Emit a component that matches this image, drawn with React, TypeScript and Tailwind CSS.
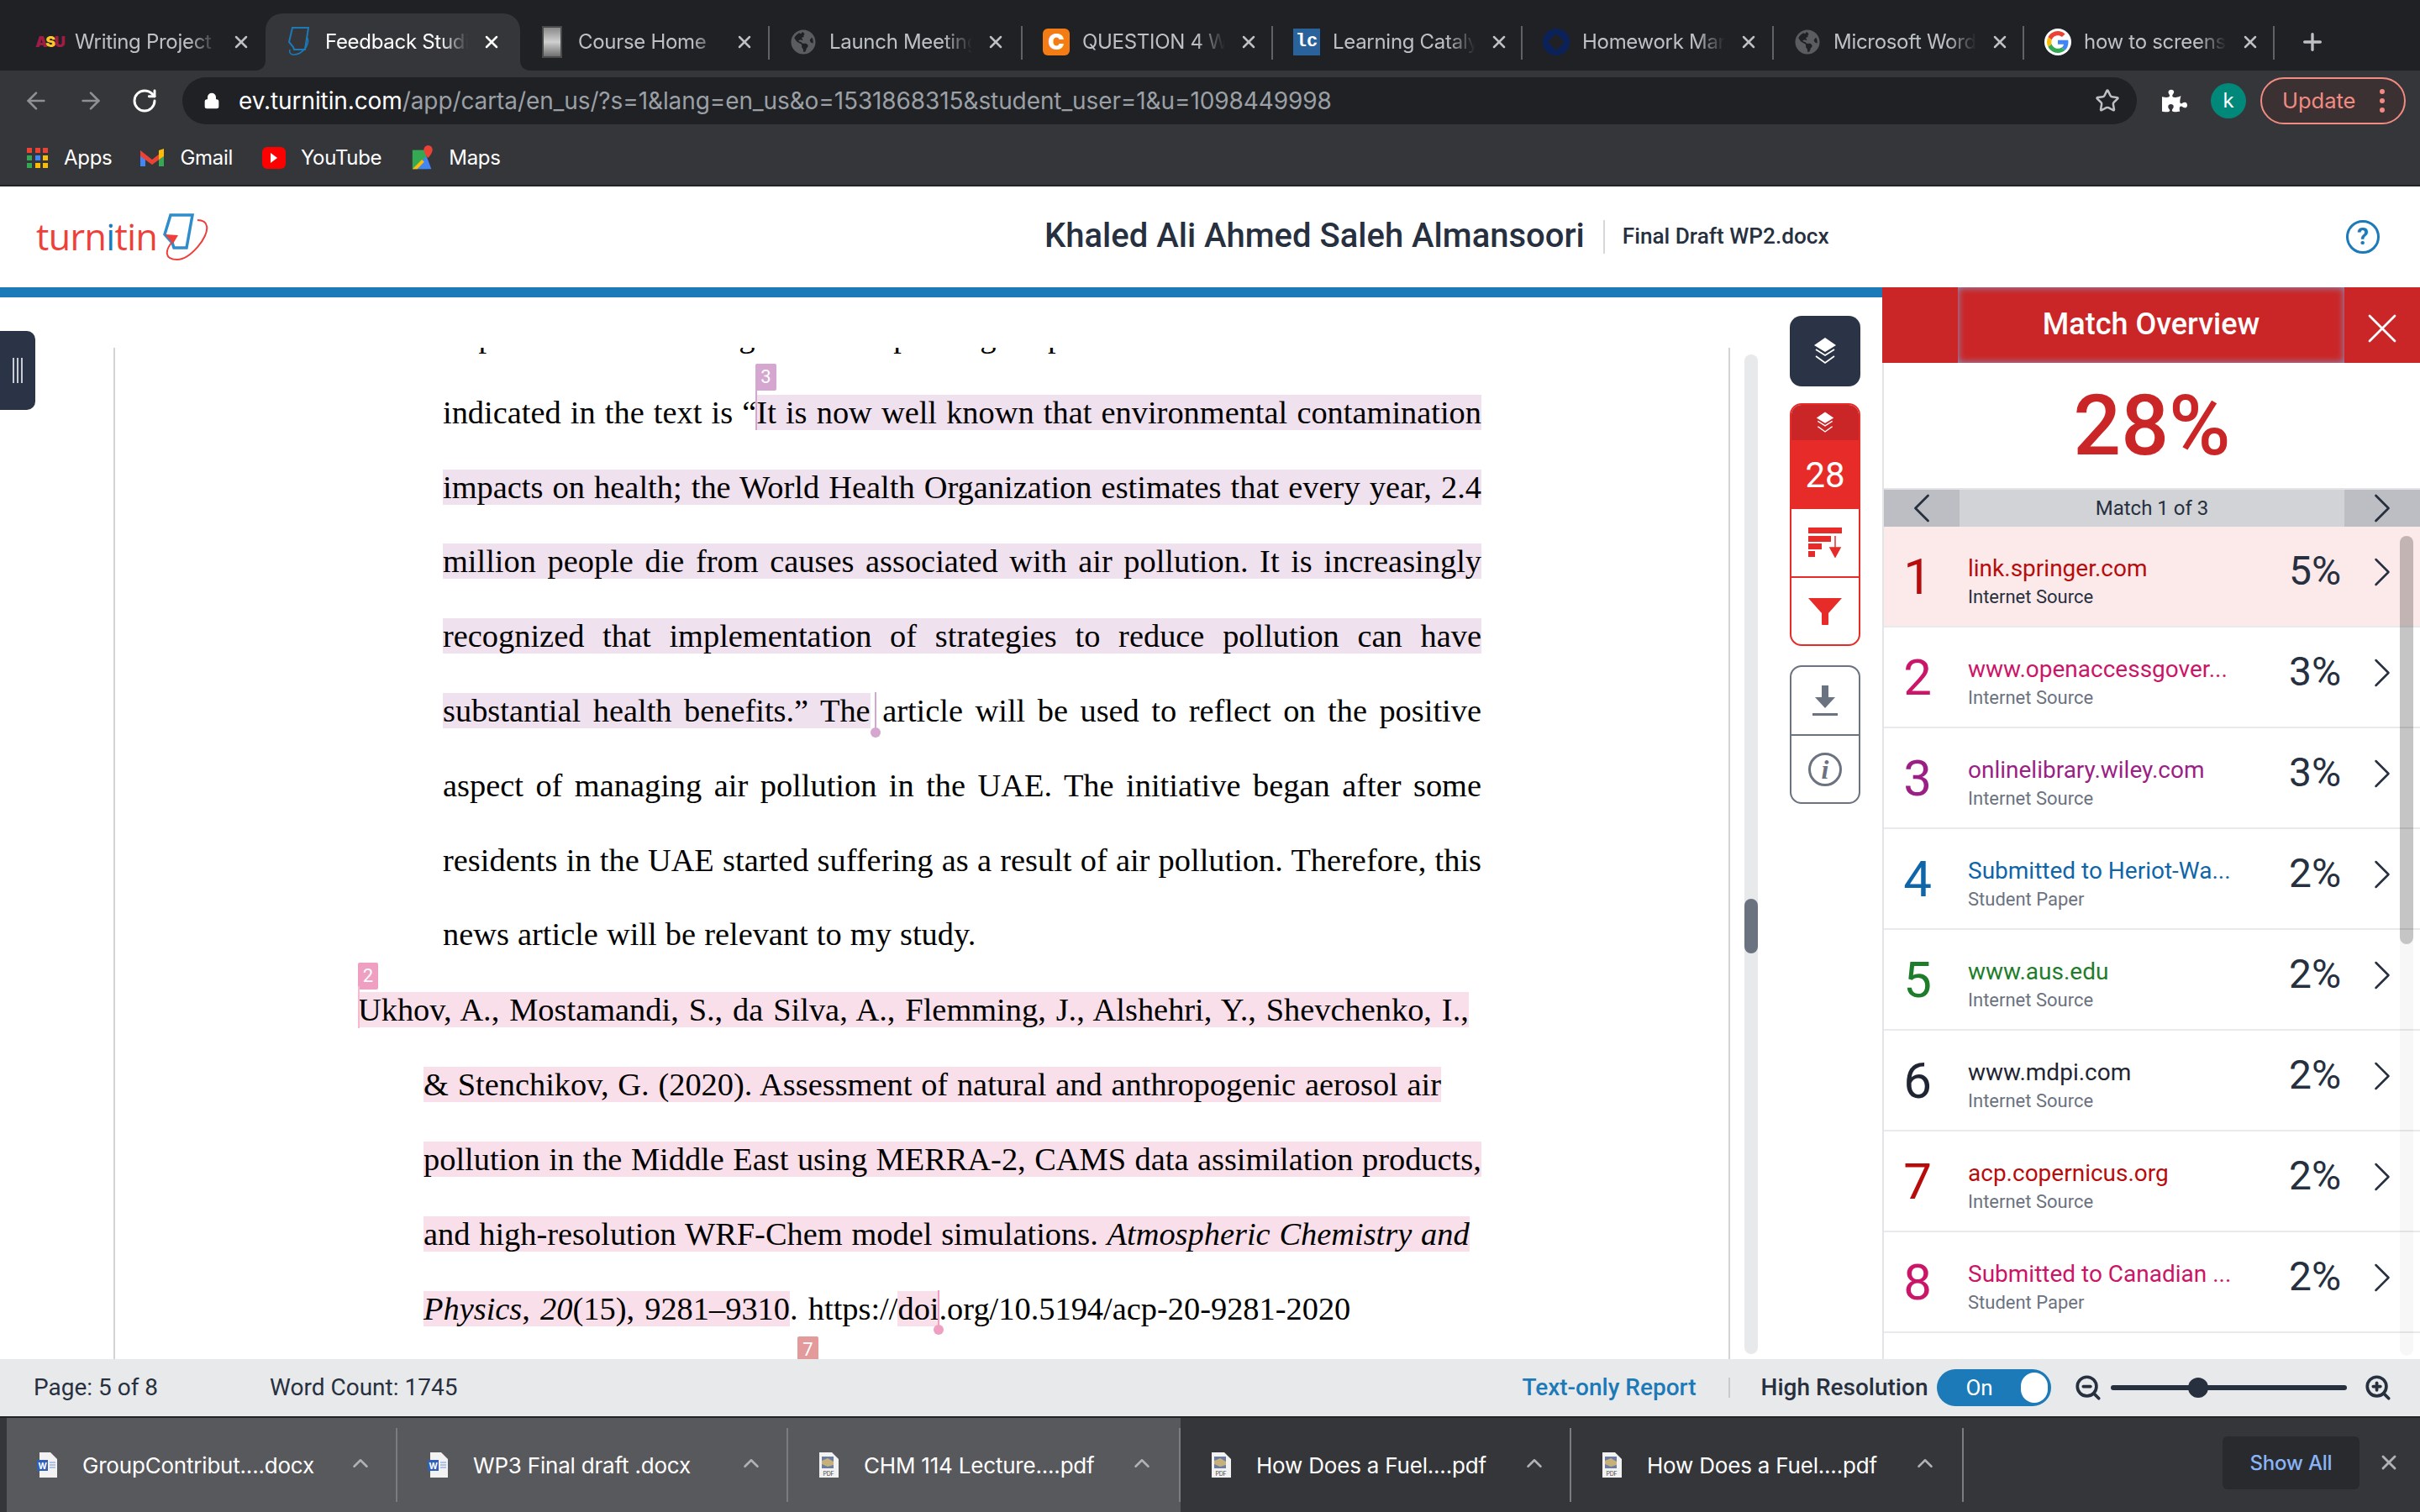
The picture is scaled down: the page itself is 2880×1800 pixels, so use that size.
import { ArrowLeft, ArrowRight, ChevronLeft, ChevronRight, ChevronUp, Lock, Plus, RotateCw, Star, X, ZoomIn, ZoomOut } from 'lucide-react';
import { FaGlobeAmericas, FaPuzzlePiece } from 'react-icons/fa';

const chromeFont = "font-['Inter','Liberation_Sans',sans-serif]";
const appFont = "font-['Roboto','Liberation_Sans',sans-serif]";

function AsuIcon() {
  return (
    <div className="w-[32px] text-[18px] font-black text-[#a01c44] leading-none tracking-[-1.5px] text-center">
      A<span className="text-[#ffc627]">S</span>U
    </div>
  );
}

function TiiPaper({ className }: { className?: string }) {
  return (
    <svg viewBox="0 0 32 38" className={className} fill="none">
      <path d="M8 2h19l-4 26H10l-1-3-5-6z" stroke="#1c7ab8" strokeWidth="2" />
      <path d="M26 14c3 10-8 21-18 20-3-1-4-3-3-6" stroke="#1c7ab8" strokeWidth="1.5" />
    </svg>
  );
}

function CourseIcon() {
  return <div className="w-[24px] h-[38px] border-2 border-[#4a4a4a] bg-gradient-to-b from-[#8a8a8a] via-[#d0d0d0] to-[#707070]" />;
}

function GlobeIcon() {
  return <FaGlobeAmericas className="w-[30px] h-[30px] text-[#5a5c60]" />;
}

function QuestionIcon() {
  return (
    <div className="w-[32px] h-[32px] rounded-[6px] bg-[#f47c14] flex items-center justify-center">
      <span className="text-[26px] font-black text-white leading-none">C</span>
    </div>
  );
}

function LcIcon() {
  return (
    <div className="w-[32px] h-[32px] bg-[#2a639c] flex items-center justify-center text-[22px] leading-none font-bold text-white font-['Liberation_Mono',monospace]">
      lc
    </div>
  );
}

function HomeworkIcon() {
  return (
    <svg viewBox="0 0 32 32" className="w-[32px] h-[32px]">
      <circle cx="16" cy="16" r="16" fill="#0a2259" />
      <path d="M16 6l10 10-10 10L6 16z" fill="#202124" />
    </svg>
  );
}

function GoogleIcon() {
  return (
    <div className="w-[32px] h-[32px] rounded-full bg-white flex items-center justify-center">
      <svg viewBox="0 0 48 48" className="w-[26px] h-[26px]">
        <path fill="#EA4335" d="M24 9.5c3.5 0 6.6 1.2 9.1 3.6l6.8-6.8C35.8 2.4 30.4 0 24 0 14.6 0 6.5 5.4 2.6 13.2l7.9 6.2C12.400 13.600 17.700 9.500 24 9.500z" />
        <path fill="#4285F4" d="M47 24.500c0-1.600-.1-3.100-.4-4.500H24v9h13c-.6 3-2.200 5.500-4.800 7.200l7.700 6C44.400 37.900 47 31.800 47 24.500z" />
        <path fill="#FBBC05" d="M10.500 28.600C10 27.200 9.800 25.600 9.800 24s.3-3.200.7-4.600l-7.900-6.200C.9 16.500 0 20.100 0 24s.9 7.500 2.600 10.800z" />
        <path fill="#34A853" d="M24 48c6.500 0 11.900-2.100 15.900-5.800l-7.700-6c-2.200 1.500-4.900 2.300-8.200 2.300-6.300 0-11.600-4.100-13.500-9.900l-7.900 6.200C6.500 42.600 14.600 48 24 48z" />
      </svg>
    </div>
  );
}

const tabs = [
  { title: 'Writing Project', icon: <AsuIcon />, width: 'w-[298px]', noDivider: true },
  { title: 'Feedback Studio', icon: <TiiPaper className="w-[32px] h-[38px]" />, width: 'w-[298px]', active: true },
  { title: 'Course Home', icon: <CourseIcon />, width: 'w-[302px] pl-[27px]' },
  { title: 'Launch Meeting', icon: <GlobeIcon />, width: 'w-[301px]' },
  { title: 'QUESTION 4 Week', icon: <QuestionIcon />, width: 'w-[298px]' },
  { title: 'Learning Catalytics', icon: <LcIcon />, width: 'w-[297px]' },
  { title: 'Homework Manager', icon: <HomeworkIcon />, width: 'w-[299px]' },
  { title: 'Microsoft Word', icon: <GlobeIcon />, width: 'w-[298px]' },
  { title: 'how to screenshot', icon: <GoogleIcon />, width: 'w-[298px]' },
];

function TabStrip() {
  return (
    <div className={`h-[84px] bg-[#202124] flex pl-[18px] ${chromeFont}`}>
      {tabs.map((tab) => (
        <div key={tab.title} className={`relative h-[84px] flex items-center pl-[24px] pt-[16px] shrink-0 ${tab.width}`}>
          {tab.active && (
            <div className="absolute left-0 -right-[5px] top-[16px] bottom-0 bg-[#35363a] rounded-t-[20px]">
              <svg viewBox="0 0 12 12" className="absolute -left-[12px] bottom-0 w-[12px] h-[12px]">
                <path d="M12 0v12H0c7 0 12-5 12-12z" fill="#35363a" />
              </svg>
              <svg viewBox="0 0 12 12" className="absolute -right-[12px] bottom-0 w-[12px] h-[12px]">
                <path d="M0 0v12h12C5 12 0 7 0 0z" fill="#35363a" />
              </svg>
            </div>
          )}
          {!tab.active && !tab.noDivider && <div className="absolute right-0 top-[31px] h-[40px] w-[2px] bg-[#5f6368]" />}
          <div className="relative w-[32px] h-[40px] mr-[15px] flex items-center justify-center shrink-0">{tab.icon}</div>
          <div
            className={`relative w-[170px] overflow-hidden whitespace-nowrap text-[24px] tracking-[-0.3px] [mask-image:linear-gradient(to_right,black_80%,transparent)] ${
              tab.active ? 'text-white' : 'text-[#bdc1c6]'
            }`}
          >
            {tab.title}
          </div>
          <X className={`relative ml-[16px] w-[24px] h-[24px] shrink-0 ${tab.active ? 'text-white' : 'text-[#bdc1c6]'}`} strokeWidth={2.5} />
        </div>
      ))}
      <Plus className="ml-[29px] mt-[34px] w-[32px] h-[32px] text-[#bdc1c6]" strokeWidth={2.5} />
    </div>
  );
}

function Toolbar() {
  return (
    <div className={`h-[72px] bg-[#35363a] flex items-center pl-[27px] ${chromeFont}`}>
      <ArrowLeft className="w-[32px] h-[32px] text-[#8e9094]" strokeWidth={2} />
      <ArrowRight className="ml-[33px] w-[32px] h-[32px] text-[#8e9094]" strokeWidth={2} />
      <RotateCw className="ml-[32px] w-[32px] h-[32px] text-white" strokeWidth={2.2} />
      <div className="ml-[29px] w-[2326px] h-[56px] rounded-full bg-[#202124] flex items-center pl-[25px]">
        <Lock className="w-[20px] h-[24px] text-white fill-white" strokeWidth={2} />
        <div className="ml-[22px] text-[28px] whitespace-nowrap tracking-[-0.1px] text-[#9aa0a6]">
          <span className="text-white">ev.turnitin.com</span>/app/carta/en_us/?s=1&amp;lang=en_us&amp;o=1531868315&amp;student_user=1&amp;u=1098449998
        </div>
        <Star className="ml-auto mr-[20px] w-[30px] h-[30px] text-[#bdc1c6]" strokeWidth={2} />
      </div>
      <FaPuzzlePiece className="ml-[30px] w-[30px] h-[30px] text-white" />
      <div className="ml-[28px] w-[42px] h-[42px] rounded-full bg-[#00897b] flex items-center justify-center text-[24px] text-white">k</div>
      <div className="ml-[17px] w-[173px] h-[56px] rounded-full border-2 border-[#f28b82] bg-[#3c3132] flex items-center pl-[24px]">
        <span className="text-[25.5px] text-[#f28b82]">Update</span>
        <div className="ml-[29px] flex flex-col gap-[5px]">
          <div className="w-[6px] h-[6px] rounded-full bg-[#f28b82]" />
          <div className="w-[6px] h-[6px] rounded-full bg-[#f28b82]" />
          <div className="w-[6px] h-[6px] rounded-full bg-[#f28b82]" />
        </div>
      </div>
    </div>
  );
}

function AppsIcon() {
  const colors = ['#ea4335', '#ea4335', '#ea4335', '#34a853', '#4285f4', '#fbbc05', '#34a853', '#fbbc05', '#fbbc05'];
  return (
    <div className="grid grid-cols-3 gap-[3px] w-[26px]">
      {colors.map((c, i) => (
        <div key={i} className="w-[6px] h-[6px]" style={{ backgroundColor: c }} />
      ))}
    </div>
  );
}

function BookmarksBar() {
  return (
    <div className={`h-[64px] bg-[#35363a] flex items-center pl-[32px] text-[24px] tracking-[-0.3px] text-white ${chromeFont}`}>
      <AppsIcon />
      <span className="ml-[18px]">Apps</span>
      <svg viewBox="0 0 28 24" className="ml-[34px] w-[28px] h-[26px]">
        <path d="M0 3v19h6V10z" fill="#4285f4" />
        <path d="M28 3v19h-6V10z" fill="#34a853" />
        <path d="M0 3l14 11L28 3v7l-14 10L0 10z" fill="#ea4335" />
        <path d="M22 3l6-2v9l-6 4z" fill="#fbbc05" />
      </svg>
      <span className="ml-[19px]">Gmail</span>
      <div className="ml-[35px] w-[28px] h-[26px] rounded-[6px] bg-[#ff0000] flex items-center justify-center">
        <div className="w-0 h-0 border-y-[6px] border-y-transparent border-l-[8px] border-l-white" />
      </div>
      <span className="ml-[18px]">YouTube</span>
      <svg viewBox="0 0 26 32" className="ml-[36px] w-[26px] h-[30px]">
        <path d="M0 6h18v24H0z" fill="#34a853" />
        <path d="M0 30l18-16 6 16z" fill="#4285f4" />
        <path d="M0 30l12-12 3 3L6 30z" fill="#fbbc05" />
        <path d="M20 0a5.500 5.500 0 00-5.500 5.500C14.500 10 20 16 20 16s5.500-6 5.500-10.500A5.500 5.500 0 0020 0z" fill="#ea4335" />
      </svg>
      <span className="ml-[18px]">Maps</span>
    </div>
  );
}

function TurnitinHeader() {
  return (
    <div className={`h-[120px] bg-white flex items-center pl-[43px] ${appFont}`}>
      <div className="flex items-center w-[205px] font-['Open_Sans',sans-serif] text-[43px] font-medium tracking-[-0.6px] text-[#ee3f3a] leading-none">
        <span className="-mt-[2px]">
          turn<span className="text-[#1c7ab8]">i</span>tin
        </span>
        <svg viewBox="0 0 54 57" className="ml-[7px] w-[54px] h-[57px] shrink-0">
          <path d="M9 2h26l-7 39H13l-2-6-9-10z" fill="none" stroke="#2f8dcc" strokeWidth="3.500" />
          <path d="M2 25l16 1-6 10z" fill="#ee3f3a" />
          <path d="M10 35C3 44 1 55 17 55 32 55 55 28 52 15 51 10 47 8 41 8" fill="none" stroke="#ee3f3a" strokeWidth="2" />
        </svg>
      </div>
      <div className="ml-[995px] pb-[2px] text-[40px] font-medium text-[#27303f] whitespace-nowrap">Khaled Ali Ahmed Saleh Almansoori</div>
      <div className="ml-[22px] w-[2px] h-[40px] bg-[#d5d7da]" />
      <div className="ml-[21px] text-[26.200px] font-medium text-[#27303f] whitespace-nowrap">Final Draft WP2.docx</div>
      <div className="ml-auto mr-[48px] w-[40px] h-[40px] rounded-full border-[3px] border-[#1c7ab8] flex items-center justify-center text-[28px] font-bold text-[#1c7ab8]">?</div>
    </div>
  );
}

const purple = 'bg-[#f0e1ef]';
const pink = 'bg-[#f9dfea]';
const justified = 'pl-[390px] w-[1626px] h-[88.8px] leading-[88.8px] text-justify [text-align-last:justify] whitespace-nowrap';
const natural = 'h-[89px] leading-[89px] pl-[367px] whitespace-nowrap';

function DocumentPage() {
  return (
    <div className="relative w-[1924px] h-[1204px] border-x-2 border-[#d2d3d5] overflow-hidden font-['Liberation_Serif',serif] text-[38.4px] text-black">
      <div className="-mt-[57px]">
        {/* line scrolled out of view, only its descenders show */}
        <div className="pl-[390px] h-[89.8px] leading-[86.8px] whitespace-nowrap tracking-[1px]">
          impact on the local<span className="ml-[40px]">goal of the</span>
          <span className="ml-[9px]">peace gain pi</span>
        </div>
        <div className={justified}>
          indicated in the text is “<span className={purple}>It is now well known that environmental contamination</span>
        </div>
        <div className={justified}>
          <span className={purple}>impacts on health; the World Health Organization estimates that every year, 2.4</span>
        </div>
        <div className={justified}>
          <span className={purple}>million people die from causes associated with air pollution. It is increasingly</span>
        </div>
        <div className={justified}>
          <span className={purple}>recognized that implementation of strategies to reduce pollution can have</span>
        </div>
        <div className={justified}>
          <span className={purple}>substantial health benefits.” The</span> article will be used to reflect on the positive
        </div>
        <div className={justified}>aspect of managing air pollution in the UAE. The initiative began after some</div>
        <div className={justified}>residents in the UAE started suffering as a result of air pollution. Therefore, this</div>
        <div className="pl-[390px] h-[88.8px] leading-[88.8px] whitespace-nowrap [word-spacing:0.5px]">news article will be relevant to my study.</div>
        <div className="mt-[1px] h-[89px] leading-[89px] pl-[289px] whitespace-nowrap [word-spacing:2.300px]">
          <span className={pink}>Ukhov, A., Mostamandi, S., da Silva, A., Flemming, J., Alshehri, Y., Shevchenko, I.,</span>
        </div>
        <div className={`${natural} [word-spacing:1.200px]`}>
          <span className={pink}>&amp; Stenchikov, G. (2020). Assessment of natural and anthropogenic aerosol air</span>
        </div>
        <div className={`${natural} [word-spacing:0.900px]`}>
          <span className={pink}>pollution in the Middle East using MERRA-2, CAMS data assimilation products,</span>
        </div>
        <div className={`${natural} [word-spacing:1.200px]`}>
          <span className={pink}>
            and high-resolution WRF-Chem model simulations. <i>Atmospheric Chemistry and</i>
          </span>
        </div>
        <div className={`${natural} [word-spacing:2.600px]`}>
          <span className={pink}>
            <i>Physics</i>, <i>20</i>(15), 9281–9310
          </span>
          . https://<span className={pink}>doi</span>.org/10.5194/acp-20-9281-2020
        </div>
      </div>

      {/* match markers, positioned over the text */}
      <div className={`absolute left-[762px] top-[19px] w-[25px] h-[32px] rounded-[2px] bg-[#d4a6d0] text-white text-[22px] leading-[32px] text-center ${appFont}`}>3</div>
      <div className="absolute left-[762px] top-[46px] w-[2px] h-[52px] bg-[#d4a6d0]" />
      <div className="absolute left-[904px] top-[410px] w-[2px] h-[54px] bg-[#d4a6d0]" />
      <div className="absolute left-[899px] top-[452px] w-[12px] h-[12px] rounded-full bg-[#d4a6d0]" />
      <div className={`absolute left-[289px] top-[732px] w-[24px] h-[32px] rounded-[2px] bg-[#ee9fc2] text-white text-[22px] leading-[32px] text-center ${appFont}`}>2</div>
      <div className="absolute left-[289px] top-[760px] w-[2px] h-[50px] bg-[#f5b9d2]" />
      <div className="absolute left-[979px] top-[1122px] w-[2px] h-[52px] bg-[#ee9fc2]" />
      <div className="absolute left-[974px] top-[1163px] w-[12px] h-[12px] rounded-full bg-[#ee9fc2]" />
      <div className={`absolute left-[812px] top-[1177px] w-[25px] h-[30px] rounded-t-[2px] bg-[#e29a9a] text-white text-[22px] leading-[32px] text-center ${appFont}`}>7</div>
    </div>
  );
}

function Layers({ className }: { className?: string }) {
  return (
    <svg viewBox="0 0 28 34" className={className} fill="none">
      <path d="M14 1l13 9-13 8-13-8z" fill="#fff" />
      <path d="M3 15l11 7 11-7M3 23l11 8 11-8" stroke="#fff" strokeWidth="1.800" />
    </svg>
  );
}

function ToolColumn() {
  return (
    <div className={`ml-[38px] mt-[22px] w-[84px] flex flex-col ${appFont}`}>
      <div className="h-[84px] rounded-[14px] bg-[#2b3346] flex items-center justify-center">
        <Layers className="w-[28px] h-[36px]" />
      </div>
      <div className="mt-[20px] h-[289px] rounded-[14px] border-2 border-[#e62b28] overflow-hidden flex flex-col">
        <div className="h-[42px] bg-[#cb2627] flex items-center justify-center">
          <Layers className="w-[22px] h-[28px]" />
        </div>
        <div className="h-[82px] bg-[#e62b28] flex items-center justify-center text-[42px] text-white">28</div>
        <div className="h-[82px] border-b-2 border-[#e62b28] flex items-center justify-center">
          <svg viewBox="0 0 40 36" className="w-[40px] h-[36px]">
            <path d="M0 0h40v7H0zM0 10h27v7H0zM0 19h16v7H0zM0 28h8v7H0z" fill="#e62b28" />
            <path d="M32 10v16M26 24h12l-6 11z" fill="#e62b28" stroke="#e62b28" strokeWidth="1.500" />
          </svg>
        </div>
        <div className="flex-1 flex items-center justify-center">
          <svg viewBox="0 0 40 32" className="w-[40px] h-[32px]">
            <path d="M0 0h40L24 18v12a4 4 0 01-8 0V18z" fill="#e62b28" />
          </svg>
        </div>
      </div>
      <div className="mt-[23px] h-[165px] rounded-[14px] border-2 border-[#6b7280] flex flex-col">
        <div className="h-[82px] border-b-2 border-[#6b7280] flex items-center justify-center">
          <svg viewBox="0 0 30 36" className="w-[30px] h-[36px]">
            <path d="M11 0h8v14h8L15 27 3 14h8z" fill="#6b7280" />
            <path d="M0 33h30v3H0z" fill="#6b7280" />
          </svg>
        </div>
        <div className="flex-1 flex items-center justify-center">
          <div className="w-[40px] h-[40px] rounded-full border-[3px] border-[#6b7280] flex items-center justify-center font-['Liberation_Serif',serif] italic font-bold text-[32px] text-[#6b7280]">i</div>
        </div>
      </div>
    </div>
  );
}

const matches = [
  { n: 1, name: 'link.springer.com', sub: 'Internet Source', pct: '5%', text: 'text-[#b80c0c]', active: true },
  { n: 2, name: 'www.openaccessgover...', sub: 'Internet Source', pct: '3%', text: 'text-[#cb1568]' },
  { n: 3, name: 'onlinelibrary.wiley.com', sub: 'Internet Source', pct: '3%', text: 'text-[#9b1f85]' },
  { n: 4, name: 'Submitted to Heriot-Wa...', sub: 'Student Paper', pct: '2%', text: 'text-[#0e65a8]' },
  { n: 5, name: 'www.aus.edu', sub: 'Internet Source', pct: '2%', text: 'text-[#1e7d2b]' },
  { n: 6, name: 'www.mdpi.com', sub: 'Internet Source', pct: '2%', text: 'text-[#1f2533]' },
  { n: 7, name: 'acp.copernicus.org', sub: 'Internet Source', pct: '2%', text: 'text-[#b80c0c]' },
  { n: 8, name: 'Submitted to Canadian ...', sub: 'Student Paper', pct: '2%', text: 'text-[#cb1568]' },
];

function MatchPanel() {
  return (
    <div className={`w-[640px] shrink-0 flex flex-col bg-white ${appFont}`}>
      <div className="h-[90px] bg-[#cb2627] flex text-white">
        <div className="w-[90px]" />
        <div className="w-[460px] flex items-center justify-center pb-[3px] text-[36px] font-medium shadow-[inset_0_0_8px_#7f9fcf]">Match Overview</div>
        <div className="flex-1 flex items-center justify-center pt-[8px]">
          <X className="w-[60px] h-[60px]" strokeWidth={1.1} />
        </div>
      </div>
      <div className="flex-1 flex flex-col border-l-2 border-[#e3e4e6] min-h-0">
        <div className="h-[149px] flex items-center justify-center text-[100px] font-medium text-[#cb2627] leading-none">28%</div>
        <div className="h-[46px] border-t-2 border-[#e3e4e6] bg-[#d1d3d7] flex items-center text-[#27303f] text-[24px]">
          <div className="w-[90px] h-full bg-[#bcbec3] flex items-center justify-center">
            <ChevronLeft className="w-[60px] h-[60px] shrink-0" strokeWidth={1.1} />
          </div>
          <div className="flex-1 text-center">Match 1 of 3</div>
          <div className="w-[90px] h-full bg-[#bcbec3] flex items-center justify-center">
            <ChevronRight className="w-[60px] h-[60px] shrink-0" strokeWidth={1.1} />
          </div>
        </div>
        <div className="relative flex-1">
          {matches.map((m) => (
            <div key={m.n} className={`h-[120px] flex items-center border-b-2 border-[#e9eaeb] ${m.active ? 'bg-[#fce9ea]' : ''}`}>
              <div className={`w-[80px] mr-[20px] pt-[2px] text-center text-[60px] leading-none ${m.text}`}>{m.n}</div>
              <div className="w-[382px] self-start pt-[33px]">
                <div className={`text-[28px] leading-[34px] whitespace-nowrap ${m.text}`}>{m.name}</div>
                <div className={`text-[22px] leading-[34px] ${m.active ? 'text-[#27303f]' : 'text-[#6b7280]'}`}>{m.sub}</div>
              </div>
              <div className="w-[76px] mb-[12px] text-[48px] leading-none text-[#27303f]">{m.pct}</div>
              <ChevronRight className="ml-[5px] mb-[10px] w-[60px] h-[60px] shrink-0 text-[#27303f]" strokeWidth={1} />
            </div>
          ))}
          {/* list scrollbar sits on top of the rows */}
          <div className="absolute right-[8px] top-[11px] bottom-[4px] w-[16px] rounded-full bg-black/[0.03]">
            <div className="h-[486px] rounded-full bg-black/20" />
          </div>
        </div>
      </div>
    </div>
  );
}

function StatusBar() {
  return (
    <div className={`h-[68px] bg-[#e8e9eb] flex items-center pl-[40px] text-[#27303f] text-[28px] ${appFont}`}>
      <span>Page: 5 of 8</span>
      <span className="ml-[133px]">Word Count: 1745</span>
      <span className="ml-[1267px] font-medium text-[#1c7ab8]">Text-only Report</span>
      <div className="ml-[38px] w-[2px] h-[24px] bg-[#c8cace]" />
      <span className="ml-[37px] font-medium">High Resolution</span>
      <div className="ml-[11px] w-[136px] h-[44px] rounded-full bg-[#1c7ab8] flex items-center pl-[34px] pr-[4px] justify-between text-white text-[26px]">
        <span>On</span>
        <div className="w-[32px] h-[36px] rounded-full bg-white" />
      </div>
      <ZoomOut className="ml-[27px] w-[34px] h-[34px] shrink-0" strokeWidth={2.6} />
      <div className="relative ml-[10px] w-[281px] h-[6px] rounded-full bg-[#27303f]">
        <div className="absolute left-[92px] -top-[9px] w-[24px] h-[24px] rounded-full bg-[#27303f]" />
      </div>
      <ZoomIn className="ml-[20px] w-[34px] h-[34px] shrink-0" strokeWidth={2.6} />
    </div>
  );
}

function WordIcon() {
  return (
    <svg viewBox="0 0 24 30" className="w-[24px] h-[30px]">
      <path d="M3 0h13l8 8v22H3z" fill="#f2f2f2" />
      <path d="M0 9h13v13H0z" fill="#2f5fb8" />
      <text x="6.500" y="19.500" textAnchor="middle" fontSize="10" fontWeight="700" fill="#fff">W</text>
      <path d="M15 12h7M15 15h7M15 18h7" stroke="#6f94d6" strokeWidth="1" />
    </svg>
  );
}

function PdfIcon() {
  return (
    <svg viewBox="0 0 24 30" className="w-[24px] h-[30px]">
      <path d="M1 0h15l8 8v22H1z" fill="#f2f2f2" />
      <path d="M4 5h14v14H4z" fill="#6a7da0" />
      <path d="M4 10l7-3 7 4v4l-7 2-7-3z" fill="#c7b07a" />
      <text x="12" y="28" textAnchor="middle" fontSize="7" fill="#444">PDF</text>
    </svg>
  );
}

const downloads = [
  { name: 'GroupContribut....docx', icon: <WordIcon />, width: 'w-[465px]', lit: true },
  { name: 'WP3 Final draft .docx', icon: <WordIcon />, width: 'w-[465px]', lit: true },
  { name: 'CHM 114 Lecture....pdf', icon: <PdfIcon />, width: 'w-[467px]', lit: true },
  { name: 'How Does a Fuel....pdf', icon: <PdfIcon />, width: 'w-[465px]' },
  { name: 'How Does a Fuel....pdf', icon: <PdfIcon />, width: 'w-[467px]' },
];

function DownloadsBar() {
  return (
    <div className={`h-[112px] bg-[#35363a] flex pl-[8px] text-[26px] tracking-[-0.2px] ${chromeFont}`}>
      {downloads.map((d, i) => (
        <div key={i} className={`relative flex items-center h-full pl-[36px] shrink-0 ${d.width} ${d.lit ? 'bg-[#58595d]' : ''}`}>
          {d.icon}
          <span className="ml-[30px] w-[316px] whitespace-nowrap text-white">{d.name}</span>
          <ChevronUp className="w-[30px] h-[30px] mb-[4px] text-[#b0b2b6]" strokeWidth={2} />
          <div className="absolute right-0 top-[12px] h-[88px] w-[2px] bg-[#7a7c80]" />
        </div>
      ))}
      <div className="ml-[308px] mt-[22px] w-[163px] h-[63px] rounded-[6px] bg-[#292a2d] flex items-center justify-center text-[24px] font-medium text-[#8ab4f8]">
        Show All
      </div>
      <X className="ml-[21px] mt-[39px] w-[28px] h-[28px] text-[#b0b2b6]" strokeWidth={2.5} />
    </div>
  );
}

export default function App() {
  return (
    <div className="w-[2880px] h-[1800px] overflow-hidden flex flex-col bg-white">
      <TabStrip />
      <Toolbar />
      <BookmarksBar />
      <div className="h-[2px] bg-[#222326]" />
      <TurnitinHeader />
      <div className="h-[1276px] flex">
        <div className="flex-1 flex flex-col">
          <div className="h-[12px] bg-[#1c7ab8]" />
          <div className="relative flex-1 flex items-start pl-[135px]">
            <div className="absolute left-0 top-[40px] w-[42px] h-[94px] rounded-r-[10px] bg-[#2b3346] flex items-center pl-[15px]">
              <div className="w-[12px] h-[30px] border-x-2 border-[#c9ccd2] flex justify-center">
                <div className="w-[2px] h-full bg-[#c9ccd2]" />
              </div>
            </div>
            <div className="mt-[60px]">
              <DocumentPage />
            </div>
            <div className="relative ml-[17px] mt-[68px] w-[16px] h-[1190px] rounded-full bg-[#e8e9eb]">
              <div className="absolute top-[648px] w-[16px] h-[65px] rounded-full bg-[#6b7280]" />
            </div>
            <ToolColumn />
          </div>
        </div>
        <MatchPanel />
      </div>
      <StatusBar />
      <div className="h-[2px] bg-[#222326]" />
      <DownloadsBar />
    </div>
  );
}
